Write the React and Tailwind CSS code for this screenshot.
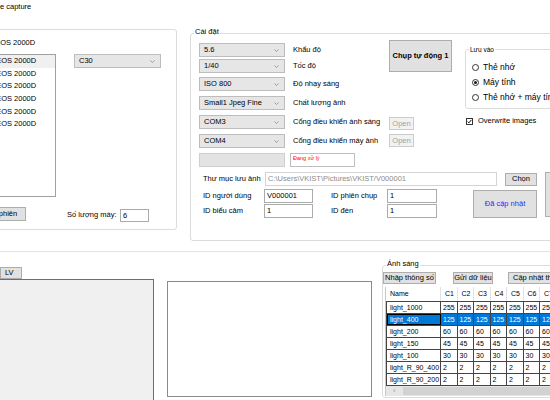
import React from "react";

const Combo = ({ value, className = "" }) => (
  <div
    className={`flex h-[14px] shrink-0 items-center justify-between border border-[#bdbdbd] bg-[#e6e6e6] pl-[4px] pr-[5px] ${className}`}
  >
    <span className="whitespace-nowrap">{value}</span>
    <svg width="5" height="3" viewBox="0 0 5 3" className="shrink-0">
      <path d="M0.5 0.5L2.5 2.5L4.5 0.5" fill="none" stroke="#8a8a8a" strokeWidth="0.8" />
    </svg>
  </div>
);

const Btn = ({ children, className = "" }) => (
  <button
    type="button"
    className={`flex shrink-0 items-center justify-center whitespace-nowrap border border-[#adadad] bg-[#e1e1e1] ${className}`}
  >
    {children}
  </button>
);

const Box = ({ value, className = "" }) => (
  <div
    className={`flex shrink-0 items-center overflow-hidden whitespace-nowrap border border-[#ababab] bg-white pl-[2px] ${className}`}
  >
    {value}
  </div>
);

const Radio = ({ checked, label, className = "" }) => (
  <div className={`flex h-[10px] items-center ${className}`}>
    <span className="ml-[6px] flex h-[7px] w-[7px] shrink-0 items-center justify-center rounded-full border border-[#333]">
      {checked && <span className="h-[3px] w-[3px] rounded-full bg-[#1a1a1a]" />}
    </span>
    <span className="ml-[4px] whitespace-nowrap text-[8.5px]">{label}</span>
  </div>
);

const SettingRow = ({ value, label, className = "" }) => (
  <div className={`flex h-[14px] items-center ${className}`}>
    <Combo value={value} className="w-[86px]" />
    <span className="ml-[8px] whitespace-nowrap">{label}</span>
  </div>
);

const LeftGroup = () => (
  <div className="-ml-[40px] h-[201px] w-[217px] shrink-0 rounded-[3px] border border-[#dcdcdc] pt-[8px]">
    <div className="ml-[10px] whitespace-nowrap">Canon EOS 2000D</div>
    <div className="mt-[6px] flex items-start">
      <div className="ml-[7px] h-[143px] w-[88px] shrink-0 border border-[#a0a0a0] bg-white">
        {[0, 1, 2, 3, 4, 5].map((i) => (
          <div
            key={i}
            className={`flex h-[12.6px] items-center whitespace-nowrap pl-[3px] ${i === 0 ? "bg-[#f0f0f0]" : ""}`}
          >
            Canon EOS 2000D
          </div>
        ))}
      </div>
      <Combo value="C30" className="ml-[18px] w-[87px]" />
    </div>
    <div className="mt-[10px] flex items-start">
      <Btn className="ml-[14px] h-[14px] w-[51px]">Tạo phiên</Btn>
      <span className="ml-[41px] mt-[3px] w-[53px] whitespace-nowrap">Số lượng máy:</span>
      <Box value="6" className="mt-[2px] h-[13px] w-[29px]" />
    </div>
  </div>
);

const RightGroup = () => (
  <div className="ml-[13px] mt-[4px] h-[208px] w-[400px] shrink-0 rounded-[3px] border border-[#dcdcdc]">
    <div className="-mt-[7px] ml-[3px] w-fit bg-white px-[1px]">Cài đặt</div>
    <div className="mt-[6px] flex items-start pl-[8px]">
      <div className="flex w-[190px] shrink-0 flex-col">
        <SettingRow value="5.6" label="Khẩu độ" />
        <SettingRow value="1/40" label="Tốc độ" className="mt-[2px]" />
        <SettingRow value="ISO 800" label="Độ nhạy sáng" className="mt-[4px]" />
        <SettingRow value="Small1 Jpeg Fine" label="Chất lượng ảnh" className="mt-[5px]" />
        <SettingRow value="COM3" label="Cổng điều khiển ánh sáng" className="mt-[5px]" />
        <SettingRow value="COM4" label="Cổng điều khiển máy ảnh" className="mt-[5px]" />
        <div className="mt-[5px] flex h-[14px] items-start">
          <div className="h-[14px] w-[86px] shrink-0 border border-[#cfcfcf] bg-[#e3e3e3]" />
          <div className="ml-[5px] h-[14px] w-[65px] shrink-0 border border-[#bdbdbd] bg-white pl-[2px] pt-[1px] text-[5.5px] leading-[7px] text-[#ff0000]">
            Đang xử lý
          </div>
        </div>
      </div>
      <div className="flex w-[76px] shrink-0 flex-col">
        <Btn className="-mt-[3px] h-[32px] w-[63px] font-bold">Chụp tự động 1</Btn>
        <button
          type="button"
          className="mt-[45px] h-[13px] w-[25px] border border-[#cccccc] bg-[#f2f2f2] text-[#a0a0a0]"
        >
          Open
        </button>
        <button
          type="button"
          className="mt-[4px] h-[13px] w-[25px] border border-[#cccccc] bg-[#f2f2f2] text-[#a0a0a0]"
        >
          Open
        </button>
      </div>
      <div className="flex shrink-0 flex-col">
        <div className="mt-[6px] h-[60px] w-[120px] rounded-[3px] border border-[#dcdcdc]">
          <div className="-mt-[5px] ml-[3px] w-fit bg-white px-[1px] text-[6.5px]">Lưu vào</div>
          <Radio label="Thẻ nhớ" className="mt-[7px]" />
          <Radio label="Máy tính" checked className="mt-[5px]" />
          <Radio label="Thẻ nhớ + máy tính" className="mt-[5px]" />
        </div>
        <div className="mt-[7px] flex h-[10px] items-center">
          <span className="ml-[1px] flex h-[7px] w-[7px] items-center justify-center border border-[#333] bg-white">
            <svg width="5" height="5" viewBox="0 0 5 5">
              <path d="M0.6 2.6L1.9 3.9L4.4 0.9" fill="none" stroke="#111" strokeWidth="1" />
            </svg>
          </span>
          <span className="ml-[5px] whitespace-nowrap">Overwrite images</span>
        </div>
      </div>
    </div>

    <div className="mt-[5px] flex items-start pl-[12px]">
      <div className="flex shrink-0 flex-col">
        <div className="flex h-[14px] items-center">
          <span className="w-[62px] shrink-0 whitespace-nowrap">Thư mục lưu ảnh</span>
          <Box
            value="C:\Users\VKIST\Pictures\VKIST/V000001"
            className="h-[14px] w-[232px] border-[#d4d4d4] text-[#8c8c8c]"
          />
          <Btn className="ml-[8px] h-[13px] w-[32px]">Chọn</Btn>
        </div>
        <div className="mt-[3px] flex items-start">
          <div className="flex flex-col">
            <div className="flex h-[14px] items-center">
              <span className="w-[61px] shrink-0 whitespace-nowrap">ID người dùng</span>
              <Box value="V000001" className="h-[14px] w-[49px]" />
              <span className="ml-[18px] w-[56px] shrink-0 whitespace-nowrap">ID phiên chụp</span>
              <Box value="1" className="h-[14px] w-[50px]" />
            </div>
            <div className="mt-[1px] flex h-[14px] items-center">
              <span className="w-[61px] shrink-0 whitespace-nowrap">ID biểu cảm</span>
              <Box value="1" className="h-[14px] w-[49px]" />
              <span className="ml-[18px] w-[56px] shrink-0 whitespace-nowrap">ID đèn</span>
              <Box value="1" className="h-[14px] w-[50px]" />
            </div>
          </div>
          <Btn className="ml-[36px] mt-[1px] h-[28px] w-[64px] text-[#2b2bff]">Đã cập nhật</Btn>
        </div>
      </div>
      <Btn className="ml-[8px] h-[45px] w-[60px]" />
    </div>
  </div>
);

const rows = [
  ["light_1000", "255"],
  ["light_400", "125"],
  ["light_200", "60"],
  ["light_150", "45"],
  ["light_100", "30"],
  ["light_R_90_400", "2"],
  ["light_R_90_200", "2"],
];
const cols = ["C1", "C2", "C3", "C4", "C5", "C6", "C7", "C8"];

const LightGrid = () => (
  <div className="ml-[2px] mt-[3px] w-[200px] border-l border-[#c8c8c8] text-[7px]">
    <div className="flex h-[15px] border-b border-[#444]">
      <div className="flex w-[55px] shrink-0 items-center border-r border-[#e2e2e2] pl-[4px]">Name</div>
      {cols.map((c) => (
        <div key={c} className="flex w-[16.5px] shrink-0 items-center border-r border-[#e2e2e2] pl-[4px]">
          {c}
        </div>
      ))}
    </div>
    {rows.map(([name, v], i) => {
      const sel = i === 1;
      return (
        <div
          key={name}
          className={`flex h-[12px] border-b border-l border-[#444] ${sel ? "bg-[#0078d7] text-white" : "bg-white"}`}
        >
          <div
            className={`flex w-[54px] shrink-0 items-center overflow-hidden whitespace-nowrap border-r border-[#444] pl-[3px] ${sel ? "outline outline-1 -outline-offset-1 outline-black" : ""}`}
          >
            {name}
          </div>
          {cols.map((c) => (
            <div key={c} className="flex w-[16.5px] shrink-0 items-center border-r border-[#444] pl-[2px]">
              {v}
            </div>
          ))}
        </div>
      );
    })}
    <div className="flex h-[10px] items-center bg-[#e6e6e6]">
      <span className="pl-[7px] text-[8px] text-[#9a9a9a]">‹</span>
      <div className="ml-[7px] h-[8px] flex-1 bg-[#d2d2d2]" />
    </div>
  </div>
);

const AnhSang = () => (
  <div className="ml-[10px] mt-[13px] h-[133px] w-[200px] shrink-0 rounded-[3px] border border-[#dcdcdc]">
    <div className="-mt-[7px] ml-[3px] w-fit bg-white px-[1px]">Ánh sáng</div>
    <div className="mt-[3px] flex items-start">
      <Btn className="h-[12px] w-[53px]">Nhập thông số</Btn>
      <Btn className="ml-[17px] h-[12px] w-[40px] border-[#5fa0dc] bg-[#d6e8f8]">Gửi dữ liệu</Btn>
      <Btn className="ml-[15px] h-[12px] w-[70px] justify-start pl-[4px]">Cập nhật thông số</Btn>
    </div>
    <LightGrid />
  </div>
);

export default function App() {
  return (
    <div className="h-[400px] w-[550px] overflow-hidden bg-white font-['Liberation_Sans',Arial,sans-serif] text-[7.5px] leading-[10px] text-black">
      <div className="h-[29px] whitespace-nowrap pt-[2px]">e capture</div>
      <div className="flex h-[222px] items-start">
        <LeftGroup />
        <RightGroup />
      </div>
      <div className="w-full border-t border-[#e3e3e3]" />
      <div className="flex items-start">
        <div className="flex w-[154px] shrink-0 flex-col">
          <Btn className="mt-[15px] h-[12px] w-[22px] justify-start pl-[4px]">LV</Btn>
          <div className="h-[125px] border-r border-t border-[#6e6e6e] bg-[#f0f0f0]" />
        </div>
        <div className="ml-[13px] mt-[29px] h-[116px] w-[205px] shrink-0 border border-[#8a8a8a] bg-white" />
        <AnhSang />
      </div>
    </div>
  );
}
